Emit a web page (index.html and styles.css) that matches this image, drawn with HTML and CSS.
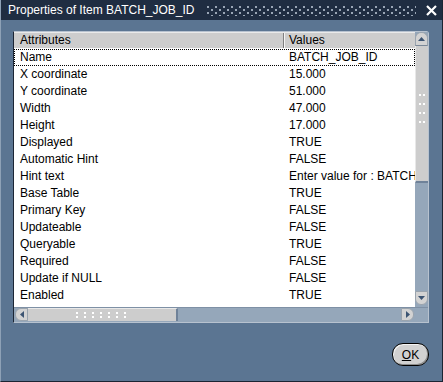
FILE: index.html
```html
<!DOCTYPE html>
<html>
<head>
<meta charset="utf-8">
<link rel="stylesheet" href="styles.css">
</head>
<body>
<div class="win">
  <div class="title">
    <span class="ttext">Properties of Item BATCH_JOB_ID</span>
    <span class="tgrip"></span>
    <span class="close"><svg width="11" height="11" viewBox="0 0 11 11"><path d="M1 1L10 10M10 1L1 10" stroke="#fff" stroke-width="2.2"/></svg></span>
  </div>
  <div class="body">
    <div class="frame">
      <div class="main">
        <div class="table">
          <div class="hdr"><div class="c1">Attributes</div><div class="c2">Values</div></div>
          <div class="row focus"><div class="c1">Name</div><div class="c2">BATCH_JOB_ID</div></div>
          <div class="row"><div class="c1">X coordinate</div><div class="c2">15.000</div></div>
          <div class="row"><div class="c1">Y coordinate</div><div class="c2">51.000</div></div>
          <div class="row"><div class="c1">Width</div><div class="c2">47.000</div></div>
          <div class="row"><div class="c1">Height</div><div class="c2">17.000</div></div>
          <div class="row"><div class="c1">Displayed</div><div class="c2">TRUE</div></div>
          <div class="row"><div class="c1">Automatic Hint</div><div class="c2">FALSE</div></div>
          <div class="row"><div class="c1">Hint text</div><div class="c2">Enter value for : BATCH_JOB_ID</div></div>
          <div class="row"><div class="c1">Base Table</div><div class="c2">TRUE</div></div>
          <div class="row"><div class="c1">Primary Key</div><div class="c2">FALSE</div></div>
          <div class="row"><div class="c1">Updateable</div><div class="c2">FALSE</div></div>
          <div class="row"><div class="c1">Queryable</div><div class="c2">TRUE</div></div>
          <div class="row"><div class="c1">Required</div><div class="c2">FALSE</div></div>
          <div class="row"><div class="c1">Update if NULL</div><div class="c2">FALSE</div></div>
          <div class="row"><div class="c1">Enabled</div><div class="c2">TRUE</div></div>
        </div>
        <div class="vscroll">
          <div class="vbtn up"><svg width="7" height="4" viewBox="0 0 7 4"><path d="M0 4L3.5 0L7 4Z" fill="#3c5472"/></svg></div>
          <div class="vthumb"><span class="vgrip"></span></div>
          <div class="vtrack"></div>
          <div class="vbtn down"><svg width="7" height="4" viewBox="0 0 7 4"><path d="M0 0L3.5 4L7 0Z" fill="#3c5472"/></svg></div>
          <div class="vtail"></div>
        </div>
      </div>
      <div class="hscroll">
        <div class="hbtn left"><svg width="4" height="7" viewBox="0 0 4 7"><path d="M4 0L0 3.5L4 7Z" fill="#3c5472"/></svg></div>
        <div class="hthumb"><span class="hgrip"></span></div>
        <div class="htrack"></div>
        <div class="hbtn right"><svg width="4" height="7" viewBox="0 0 4 7"><path d="M0 0L4 3.5L0 7Z" fill="#3c5472"/></svg></div>
        <div class="corner"></div>
      </div>
    </div>
    <div class="actions">
      <button class="ok"><span class="u">O</span>K</button>
    </div>
  </div>
</div>
</body>
</html>
```
FILE: styles.css
```css
* { box-sizing: border-box; }
html, body { margin: 0; padding: 0; background: #5b7592; }
body { font-family: "Liberation Sans", Arial, sans-serif; font-size: 12px; color: #000; }

.win {
  width: 443px; height: 382px;
  background: #5b7592;
  border-left: 1px solid #8ea1b6;
  border-right: 1px solid #1b2533;
  border-bottom: 1px solid #1b2533;
  display: flex; flex-direction: column;
}

.title {
  height: 20px; flex: none;
  background: #1f2d42;
  display: flex; align-items: center;
  padding-left: 7px;
  color: #fff;
}
.ttext { font-size: 12px; white-space: nowrap; }
.tgrip {
  flex: 1; height: 11px; margin: 0 10px 0 12px;
  background-image:
    radial-gradient(circle at 1px 1px, #9aa6b6 0.9px, transparent 1.1px),
    radial-gradient(circle at 1px 1px, #9aa6b6 0.9px, transparent 1.1px);
  background-size: 8px 6px, 8px 6px;
  background-position: 0 1px, 4px 4px;
}
.close { width: 11px; height: 11px; margin-right: 5px; display: flex; }

.body { flex: 1; display: flex; flex-direction: column; padding: 11px 13px 0 12px; }

.frame {
  width: 416px; height: 292px;
  border-top: 1px solid #b7c2cf;
  border-left: 1px solid #1c2635;
  border-right: 1px solid #b7c2cf;
  border-bottom: 1px solid #b7c2cf;
  background: #ffffff;
  display: flex; flex-direction: column;
  border-top-right-radius: 3px;
}
.main { height: 275px; display: flex; }
.table { width: 401px; overflow: hidden; background: #fff; }

.hdr { height: 16px; margin-bottom: 1px; display: flex; background: #cdcdcd; border-top: 1px solid #eaeaea; }
.hdr .c1 { border-right: 1px solid #808080; }
.hdr .c2 { border-left: 1px solid #f4f4f4; padding-left: 4px; }
.c1 { width: 270px; flex: none; padding-left: 6px; white-space: nowrap; line-height: 15px; }
.c2 { flex: 1; padding-left: 5px; white-space: nowrap; overflow: hidden; line-height: 15px; }

.row { height: 17px; display: flex; align-items: center; }
.row .c1, .row .c2 { line-height: 17px; }
.focus { outline: 1px dotted #000; outline-offset: -1px; }

.vscroll { width: 13px; flex: none; display: flex; flex-direction: column; background: #95a7ba; }
.vbtn { height: 14px; flex: none; background: #d3d3d3; display: flex; align-items: center; justify-content: center; border: 1px solid #9aa4ae; }
.vbtn.up { border-radius: 6px 6px 0 0; border-bottom-color: #7a8898; }
.vbtn.down { border-radius: 0 0 6px 6px; margin-top: 1px; }
.vthumb { height: 137px; flex: none; background: #cdcdcd; border-bottom: 2px solid #6f8299; border-left: 1px solid #e8e8e8; display: flex; justify-content: center; padding-top: 48px; }
.vgrip {
  width: 6px; height: 36px;
  background-image: radial-gradient(circle at 1px 1px, #fff 0.8px, transparent 1.1px);
  background-size: 4px 9px;
}
.vtrack { flex: 1; }
.vtail { height: 2px; flex: none; }

.hscroll { height: 15px; flex: none; display: flex; background: #95a7ba; border-top: 1px solid #7e90a5; }
.hbtn { width: 13px; flex: none; background: #d3d3d3; display: flex; align-items: center; justify-content: center; border: 1px solid #9aa4ae; height: 13px; }
.hbtn.left { border-radius: 6px 0 0 6px; margin-left: 1px; }
.hbtn.right { border-radius: 0 6px 6px 0; }
.hthumb { width: 150px; flex: none; height: 13px; background: #cdcdcd; border-right: 2px solid #6f8299; border-top: 1px solid #e8e8e8; display: flex; align-items: center; justify-content: center; }
.hgrip {
  width: 52px; height: 7px;
  background-image: radial-gradient(circle at 1px 1px, #fff 0.8px, transparent 1.1px);
  background-size: 8px 4px;
}
.htrack { flex: 1; }
.corner { width: 14px; flex: none; }

.actions { display: flex; justify-content: flex-end; padding-top: 20px; padding-right: 0; }
.ok {
  width: 37px; height: 23px;
  border: 1px solid #000; border-radius: 11px;
  background: #d1d1d1;
  box-shadow: inset 1px 1px 0 #f3f3f3, inset -1px -1px 0 #8d8d8d;
  font-family: "Liberation Sans", Arial, sans-serif; font-size: 12px; color: #000;
  padding: 0; margin: 0;
}
.u { text-decoration: underline; }
```
